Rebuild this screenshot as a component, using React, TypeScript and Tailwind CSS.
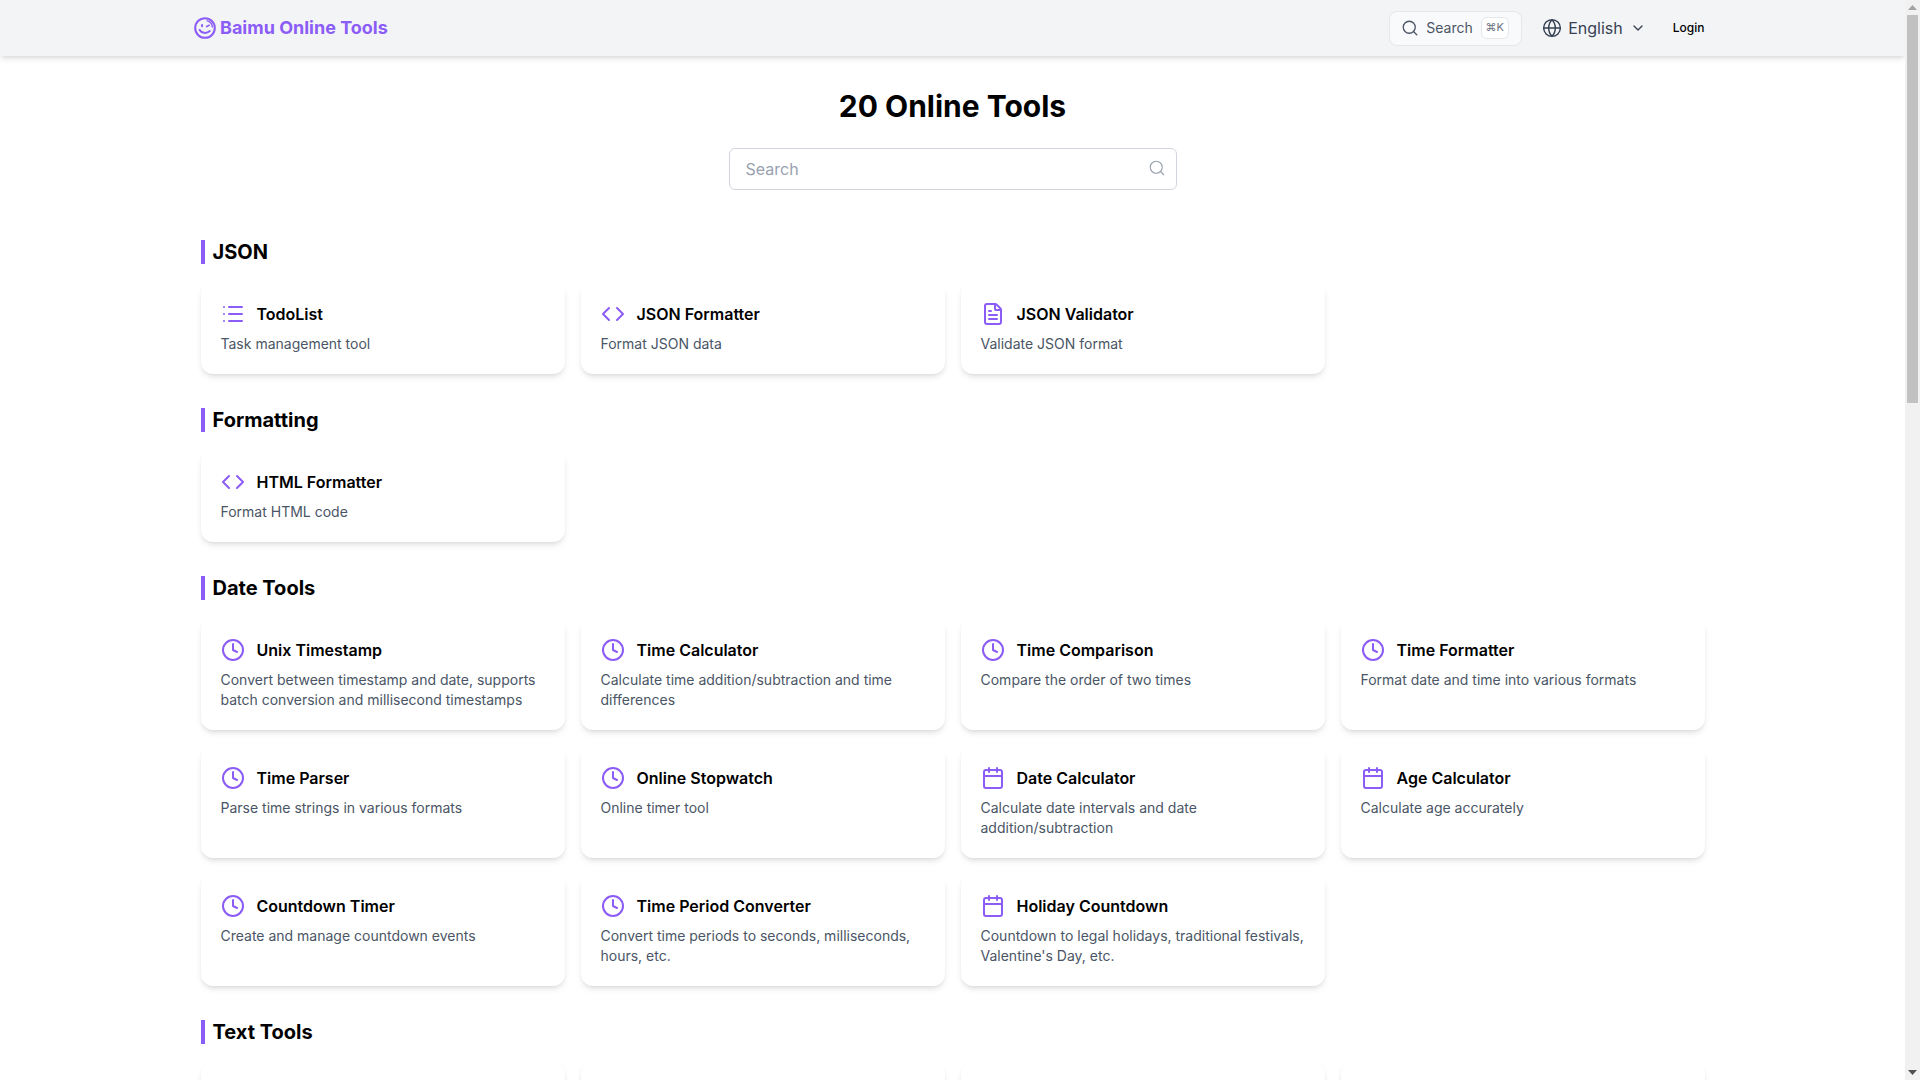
import { Search, Globe, ChevronDown, List, Code, FileText, Clock, Calendar, type LucideIcon } from "lucide-react";

type Tool = { icon: LucideIcon; title: string; desc: string };
type Section = { name: string; tools: Tool[]; blanks?: number };

const sections: Section[] = [
  {
    name: "JSON",
    tools: [
      { icon: List, title: "TodoList", desc: "Task management tool" },
      { icon: Code, title: "JSON Formatter", desc: "Format JSON data" },
      { icon: FileText, title: "JSON Validator", desc: "Validate JSON format" },
    ],
  },
  {
    name: "Formatting",
    tools: [{ icon: Code, title: "HTML Formatter", desc: "Format HTML code" }],
  },
  {
    name: "Date Tools",
    tools: [
      { icon: Clock, title: "Unix Timestamp", desc: "Convert between timestamp and date, supports batch conversion and millisecond timestamps" },
      { icon: Clock, title: "Time Calculator", desc: "Calculate time addition/subtraction and time differences" },
      { icon: Clock, title: "Time Comparison", desc: "Compare the order of two times" },
      { icon: Clock, title: "Time Formatter", desc: "Format date and time into various formats" },
      { icon: Clock, title: "Time Parser", desc: "Parse time strings in various formats" },
      { icon: Clock, title: "Online Stopwatch", desc: "Online timer tool" },
      { icon: Calendar, title: "Date Calculator", desc: "Calculate date intervals and date addition/subtraction" },
      { icon: Calendar, title: "Age Calculator", desc: "Calculate age accurately" },
      { icon: Clock, title: "Countdown Timer", desc: "Create and manage countdown events" },
      { icon: Clock, title: "Time Period Converter", desc: "Convert time periods to seconds, milliseconds, hours, etc." },
      { icon: Calendar, title: "Holiday Countdown", desc: "Countdown to legal holidays, traditional festivals, Valentine's Day, etc." },
    ],
  },
  { name: "Text Tools", tools: [], blanks: 4 },
];

function Logo() {
  return (
    <svg viewBox="0 0 24 24" className="h-[22px] w-[22px] shrink-0" fill="none" stroke="#8b5cf6" strokeWidth="2.2" strokeLinecap="round">
      <circle cx="12" cy="12" r="10.7" />
      <path d="M14.5 4.2c3 .8 5.2 3.4 5.6 6.6" strokeWidth="1.6" />
      <path d="M8.8 8.6v1.6" />
      <path d="M13.8 10.4l2.8-1.3" strokeWidth="1.8" />
      <path d="M6.2 14.2c1.8 3.6 7.6 4.2 11 1.2" />
    </svg>
  );
}

function Card({ tool }: { tool: Tool }) {
  const Icon = tool.icon;
  return (
    <div className="rounded-xl bg-white p-5 shadow-md">
      <div className="mb-2 flex h-6 items-center gap-3">
        <Icon className="h-6 w-6 shrink-0 text-[#8b5cf6]" />
        <h3 className="text-base font-semibold leading-6 text-black">{tool.title}</h3>
      </div>
      <p className="text-sm leading-5 text-gray-600">{tool.desc}</p>
    </div>
  );
}

function Scrollbar() {
  return (
    <aside className="flex h-full w-[15px] shrink-0 flex-col items-center bg-[#f1f1f1]">
      <div className="flex h-[15px] items-center justify-center">
        <svg viewBox="0 0 9 5" className="h-[5px] w-[9px]" fill="#a3a3a3">
          <path d="M4.5 0L9 5H0z" />
        </svg>
      </div>
      <div className="h-[388px] w-[11px] bg-[#c1c1c1]" />
      <div className="flex-1" />
      <div className="flex h-[15px] items-center justify-center">
        <svg viewBox="0 0 9 5" className="h-[5px] w-[9px]" fill="#505050">
          <path d="M0 0H9L4.5 5z" />
        </svg>
      </div>
    </aside>
  );
}

export default function App() {
  return (
    <div className="flex h-screen overflow-hidden bg-white font-['Inter',sans-serif]">
      <div className="min-w-0 flex-1 overflow-hidden">
        <header className="relative z-10 h-14 bg-gray-100 shadow-md">
          <div className="mx-auto flex h-14 max-w-[1536px] items-center justify-between pl-[9.5px] pr-4">
            <a className="flex items-center gap-[4px]">
              <Logo />
              <span className="text-lg font-bold text-[#8b5cf6]">Baimu Online Tools</span>
            </a>
            <div className="flex items-center">
              <button className="flex h-[35px] w-[133px] items-center rounded-lg border border-gray-200 bg-gray-50 pl-[11px] text-sm text-gray-600">
                <Search className="h-[18px] w-[18px] shrink-0" strokeWidth={1.75} />
                <span className="ml-[7px]">Search</span>
                <kbd className="ml-2 flex h-[22px] w-[28px] items-center justify-center rounded-md border border-gray-200 bg-white font-['Inter',sans-serif] text-[11px] text-gray-500">⌘K</kbd>
              </button>
              <div className="ml-[20px] flex items-center text-gray-700">
                <Globe className="h-5 w-5" strokeWidth={1.75} />
                <span className="ml-[6px] text-base">English</span>
                <ChevronDown className="ml-[7px] h-4 w-4" />
              </div>
              <button className="ml-[27px] text-xs font-medium text-black">Login</button>
            </div>
          </div>
        </header>
        <main className="mx-auto max-w-[1536px] px-4 pt-8">
          <h1 className="text-center text-3xl font-bold text-black">20 Online Tools</h1>
          <div className="relative mx-auto mt-6 w-[448px]">
            <input readOnly placeholder="Search" className="h-[42px] w-full rounded-md border border-gray-300 bg-white px-4 text-base placeholder:text-gray-400" />
            <Search className="absolute right-[11px] top-[11px] h-[18px] w-[18px] text-gray-400" strokeWidth={1.5} />
          </div>
          <div className="mt-[50px] flex flex-col gap-[34px]">
            {sections.map((s) => (
              <section key={s.name}>
                <h2 className="mb-[18px] border-l-4 border-[#8b5cf6] pl-2 text-xl font-bold leading-6 text-black">{s.name}</h2>
                <div className="grid grid-cols-4 gap-4">
                  {s.tools.map((t) => (
                    <Card key={t.title} tool={t} />
                  ))}
                  {Array.from({ length: s.blanks ?? 0 }).map((_, i) => (
                    <div key={i} className="h-[92px] rounded-xl bg-white shadow-md" />
                  ))}
                </div>
              </section>
            ))}
          </div>
        </main>
      </div>
      <Scrollbar />
    </div>
  );
}
